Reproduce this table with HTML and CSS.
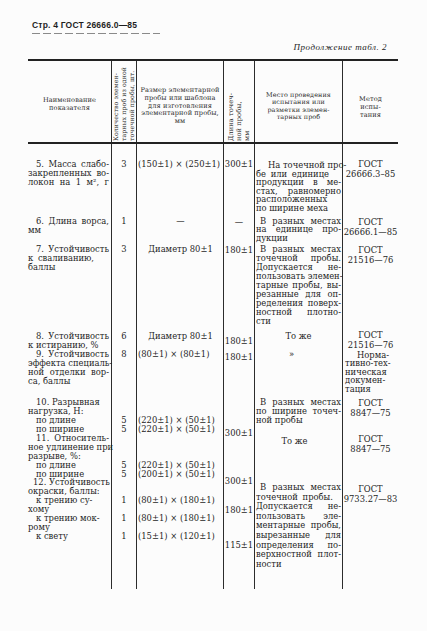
FILE: index.html
```html
<!DOCTYPE html>
<html lang="ru">
<head>
<meta charset="utf-8">
<title>ГОСТ 26666.0—85, стр. 4</title>
<link rel="stylesheet" href="styles.css">
</head>
<body>
<div class="page">
  <div class="runhead">Стр. 4 ГОСТ 26666.0—85</div>
  <div class="dash"></div>
  <div class="cont">Продолжение табл. 2</div>

  <div class="tbl">
    <div class="thead">
      <div class="h bd"><div class="htxt p35">Наименование<br>показателя</div></div>
      <div class="h bd rotcell"><div class="rot r2">Количество элемен-<br>тарных проб из одной<br>точечной пробы, шт.</div></div>
      <div class="h bd"><div class="htxt p26 lh78">Размер элементарной<br>пробы или шаблона<br>для изготовления<br>элементарной пробы,<br>мм</div></div>
      <div class="h bd rotcell"><div class="rot r4">Длина точеч-<br>ной пробы,<br>мм</div></div>
      <div class="h bd"><div class="htxt p31 lh7">Место проведения<br>испытания или<br>разметки элемен-<br>тарных проб</div></div>
      <div class="h"><div class="htxt p34">Метод<br>испы-<br>тания</div></div>
    </div>

    <div class="tbody">
      <!-- 5 -->
      <div class="c k1 bd pt16"><span class="l i j">5. Масса слабо-</span><span class="l j">закрепленных во-</span><span class="l j">локон на 1 м², г</span></div>
      <div class="c k2 bd pt16"><span class="l">3</span></div>
      <div class="c k3 bd pt16"><span class="l dim">(150±1) × (250±1)</span></div>
      <div class="c k4 bd pt16"><span class="l">300±1</span></div>
      <div class="c k5 bd pt17 lh85"><span class="l i12 j">На точечной про-</span><span class="l ws">бе или единице</span><span class="l j">продукции в ме-</span><span class="l j">стах, равномерно</span><span class="l">расположенных</span><span class="l">по ширине меха</span></div>
      <div class="c k6 pt15"><span class="l">ГОСТ</span><span class="l">26666.3–85</span></div>

      <!-- 6 -->
      <div class="c k1 bd"><span class="l i j">6. Длина ворса,</span><span class="l">мм</span></div>
      <div class="c k2 bd"><span class="l">1</span></div>
      <div class="c k3 bd ctr"><span class="l">—</span></div>
      <div class="c k4 bd pt1"><span class="l">—</span></div>
      <div class="c k5 bd lh85"><span class="l i4 j">В разных местах</span><span class="l j">на единице про-</span><span class="l">дукции</span></div>
      <div class="c k6"><span class="l">ГОСТ</span><span class="l">26666.1—85</span></div>

      <!-- 7 -->
      <div class="c k1 bd"><span class="l i j">7. Устойчивость</span><span class="l ws">к сваливанию,</span><span class="l">баллы</span></div>
      <div class="c k2 bd"><span class="l">3</span></div>
      <div class="c k3 bd ctr"><span class="l">Диаметр 80±1</span></div>
      <div class="c k4 bd pt1"><span class="l">180±1</span></div>
      <div class="c k5 bd lh9"><span class="l i4 j">В разных местах</span><span class="l j">точечной пробы.</span><span class="l j">Допускается не-</span><span class="l j">пользовать элемен-</span><span class="l j">тарные пробы, вы-</span><span class="l j">резанные для оп-</span><span class="l j">ределения поверх-</span><span class="l j">ностной плотно-</span><span class="l">сти</span></div>
      <div class="c k6"><span class="l">ГОСТ</span><span class="l">21516—76</span></div>

      <!-- 8 -->
      <div class="c k1 bd"><span class="l i j">8. Устойчивость</span><span class="l">к истиранию, %</span></div>
      <div class="c k2 bd"><span class="l">6</span></div>
      <div class="c k3 bd ctr"><span class="l">Диаметр 80±1</span></div>
      <div class="c k4 bd pt5"><span class="l">180±1</span></div>
      <div class="c k5 bd ctr"><span class="l">То же</span></div>
      <div class="c k6"><div class="up2"><span class="l">ГОСТ</span><span class="l">21516—76</span></div></div>

      <!-- 9 -->
      <div class="c k1 bd"><span class="l i j">9. Устойчивость</span><span class="l j">эффекта специаль-</span><span class="l j">ной отделки вор-</span><span class="l">са, баллы</span></div>
      <div class="c k2 bd"><span class="l">8</span></div>
      <div class="c k3 bd"><span class="l dim">(80±1) × (80±1)</span></div>
      <div class="c k4 bd pt3"><span class="l">180±1</span></div>
      <div class="c k5 bd ctr"><span class="l quote">»</span></div>
      <div class="c k6 left pt1 lh85"><span class="l i12">Норма-</span><span class="l">тивно-тех-</span><span class="l">ническая</span><span class="l">докумен-</span><span class="l">тация</span></div>

      <!-- 10 -->
      <div class="c k1 bd"><span class="l i">10. Разрывная</span><span class="l">нагрузка, Н:</span><span class="l i">по длине</span><span class="l i">по ширине</span></div>
      <div class="c k2 bd pt18"><span class="l">5</span><span class="l">5</span></div>
      <div class="c k3 bd pt18"><span class="l dim">(220±1) × (50±1)</span><span class="l dim">(220±1) × (50±1)</span></div>
      <div class="c k4 bd pt31"><span class="l">300±1</span></div>
      <div class="c k5 bd lh93"><span class="l i4 j">В разных местах</span><span class="l j">по ширине точеч-</span><span class="l">ной пробы</span></div>
      <div class="c k6"><span class="l">ГОСТ</span><span class="l">8847—75</span></div>

      <!-- 11 -->
      <div class="c k1 bd"><span class="l i j">11. Относитель-</span><span class="l j">ное удлинение при</span><span class="l">разрыве, %:</span><span class="l i">по длине</span><span class="l i">по ширине</span></div>
      <div class="c k2 bd pt27"><span class="l">5</span><span class="l">5</span></div>
      <div class="c k3 bd pt27"><span class="l dim">(220±1) × (50±1)</span><span class="l dim">(200±1) × (50±1)</span></div>
      <div class="c k4 bd pt43"><span class="l">300±1</span></div>
      <div class="c k5 bd ctr pt3"><span class="l nudge">То же</span></div>
      <div class="c k6"><span class="l">ГОСТ</span><span class="l">8847—75</span></div>

      <!-- 12 -->
      <div class="c k1 bd"><span class="l i5 j">12. Устойчивость</span><span class="l">окраски, баллы:</span><span class="l i">к трению су-</span><span class="l">хому</span><span class="l i">к трению мок-</span><span class="l">рому</span><span class="l i">к свету</span></div>
      <div class="c k2 bd pt18"><span class="l">1</span><span class="l sk">1</span><span class="l sk">1</span></div>
      <div class="c k3 bd pt18"><span class="l dim">(80±1) × (180±1)</span><span class="l dim sk">(80±1) × (180±1)</span><span class="l dim sk">(15±1) × (120±1)</span></div>
      <div class="c k4 bd pt28"><span class="l">180±1</span><span class="l sk26">115±1</span></div>
      <div class="c k5 bd pt5 lh96"><span class="l i4 j">В разных местах</span><span class="l ws">точечной пробы.</span><span class="l j">Допускается не-</span><span class="l j">пользовать эле-</span><span class="l j">ментарные пробы,</span><span class="l j">вырезанные для</span><span class="l j">определения по-</span><span class="l j">верхностной плот-</span><span class="l">ности</span></div>
      <div class="c k6 pt6"><span class="l">ГОСТ</span><span class="l">9733.27—83</span></div>
    </div>
  </div>
</div>
</body>
</html>
```

FILE: styles.css
```css
* { box-sizing: border-box; }

html, body {
  margin: 0;
  padding: 0;
}

body {
  width: 427px;
  height: 631px;
  overflow: hidden;
  background: #fcfcfc;
  color: #1e1e1e;
  font-family: "DejaVu Serif", "Liberation Serif", serif;
}

.page {
  padding-top: 20px;
}

/* running head */
.runhead {
  margin-left: 32px;
  height: 10px;
  font-family: "Liberation Sans", Arial, sans-serif;
  font-weight: bold;
  font-size: 8.5px;
  line-height: 10px;
  letter-spacing: 0.2px;
  white-space: nowrap;
}

.dash {
  margin: 3px 0 0 32px;
  width: 128px;
  height: 1px;
  background: repeating-linear-gradient(90deg, #8a8a8a 0 8px, transparent 8px 11px);
}

.cont {
  margin: 9px 40px 0 0;
  text-align: right;
  font-family: "Liberation Serif", serif;
  font-style: italic;
  font-size: 9px;
  line-height: 9px;
  letter-spacing: 0.5px;
  white-space: nowrap;
}

/* table */
.tbl {
  margin: 7px 0 0 28px;
  width: 370px;
  border-top: 2px solid #222;
}

.thead,
.tbody {
  display: grid;
  grid-template-columns: 84px 25px 87px 31px 88px 55px;
}

.thead {
  height: 83px;
  border-bottom: 2px solid #222;
  font-size: 6.6px;
  letter-spacing: 0.1px;
  color: #2a2a2a;
}

.h {
  display: flex;
  justify-content: center;
  align-items: flex-start;
  text-align: center;
}

.bd {
  border-right: 1px solid #2c2c2c;
}

.htxt {
  line-height: 8px;
  white-space: nowrap;
}

.lh78 { line-height: 7.8px; }
.lh7 { line-height: 7.3px; font-size: 6.4px; }

.p26 { padding-top: 26px; }
.p31 { padding-top: 31px; }
.p34 { padding-top: 34px; }
.p35 { padding-top: 35px; }

.rotcell {
  align-items: flex-end;
  padding-bottom: 1px;
}

.rot {
  writing-mode: vertical-rl;
  transform: rotate(180deg);
  text-align: start;
  white-space: nowrap;
  line-height: 8px;
}

.r2 {
  font-size: 6.2px;
  height: 79px;
}

.r4 {
  font-size: 6.6px;
  height: 60px;
}

/* body */
.tbody {
  grid-template-rows: 72.5px 28px 87px 18px 48px 36px 44.5px 111px;
  font-size: 8.4px;
  line-height: 9px;
}

.c {
  min-width: 0;
}

.l {
  display: block;
  text-align: left;
  white-space: nowrap;
}

.l.j {
  text-align: justify;
  text-align-last: justify;
}

.i { padding-left: 8px; }
.i4 { padding-left: 4px; }
.i5 { padding-left: 5px; }
.i12 { padding-left: 12px; }

.ws { word-spacing: 2px; }

.k1 { padding-right: 2px; }
.k2 .l,
.k4 .l,
.k6 .l { text-align: center; }
.k3 { padding-left: 1px; }
.k5 { padding: 0 1px; }

.ctr .l { text-align: center; }
.left .l { text-align: left; }
.k6.left { padding-left: 2px; }

.dim {
  letter-spacing: 0;
}

.quote { padding-right: 14px; }
.nudge { padding-right: 8px; }

.lh85 { line-height: 8.5px; }
.lh9 { line-height: 9px; }
.lh93 { line-height: 9.3px; }
.lh96 { line-height: 9.6px; }

.k6 { line-height: 10px; }
.k6.lh85 { line-height: 8.5px; }

.pt1 { padding-top: 1px; }
.pt3 { padding-top: 3px; }
.pt5 { padding-top: 5px; }
.pt6 { padding-top: 6px; }
.pt15 { padding-top: 15px; }
.pt16 { padding-top: 16px; }
.pt17 { padding-top: 17px; }
.pt18 { padding-top: 18px; }
.pt27 { padding-top: 27px; }
.pt28 { padding-top: 28px; }
.pt31 { padding-top: 31px; }
.pt43 { padding-top: 43px; }

.up2 { margin-top: -2px; }

.sk { margin-top: 9px; }
.sk26 { margin-top: 26px; }
```
